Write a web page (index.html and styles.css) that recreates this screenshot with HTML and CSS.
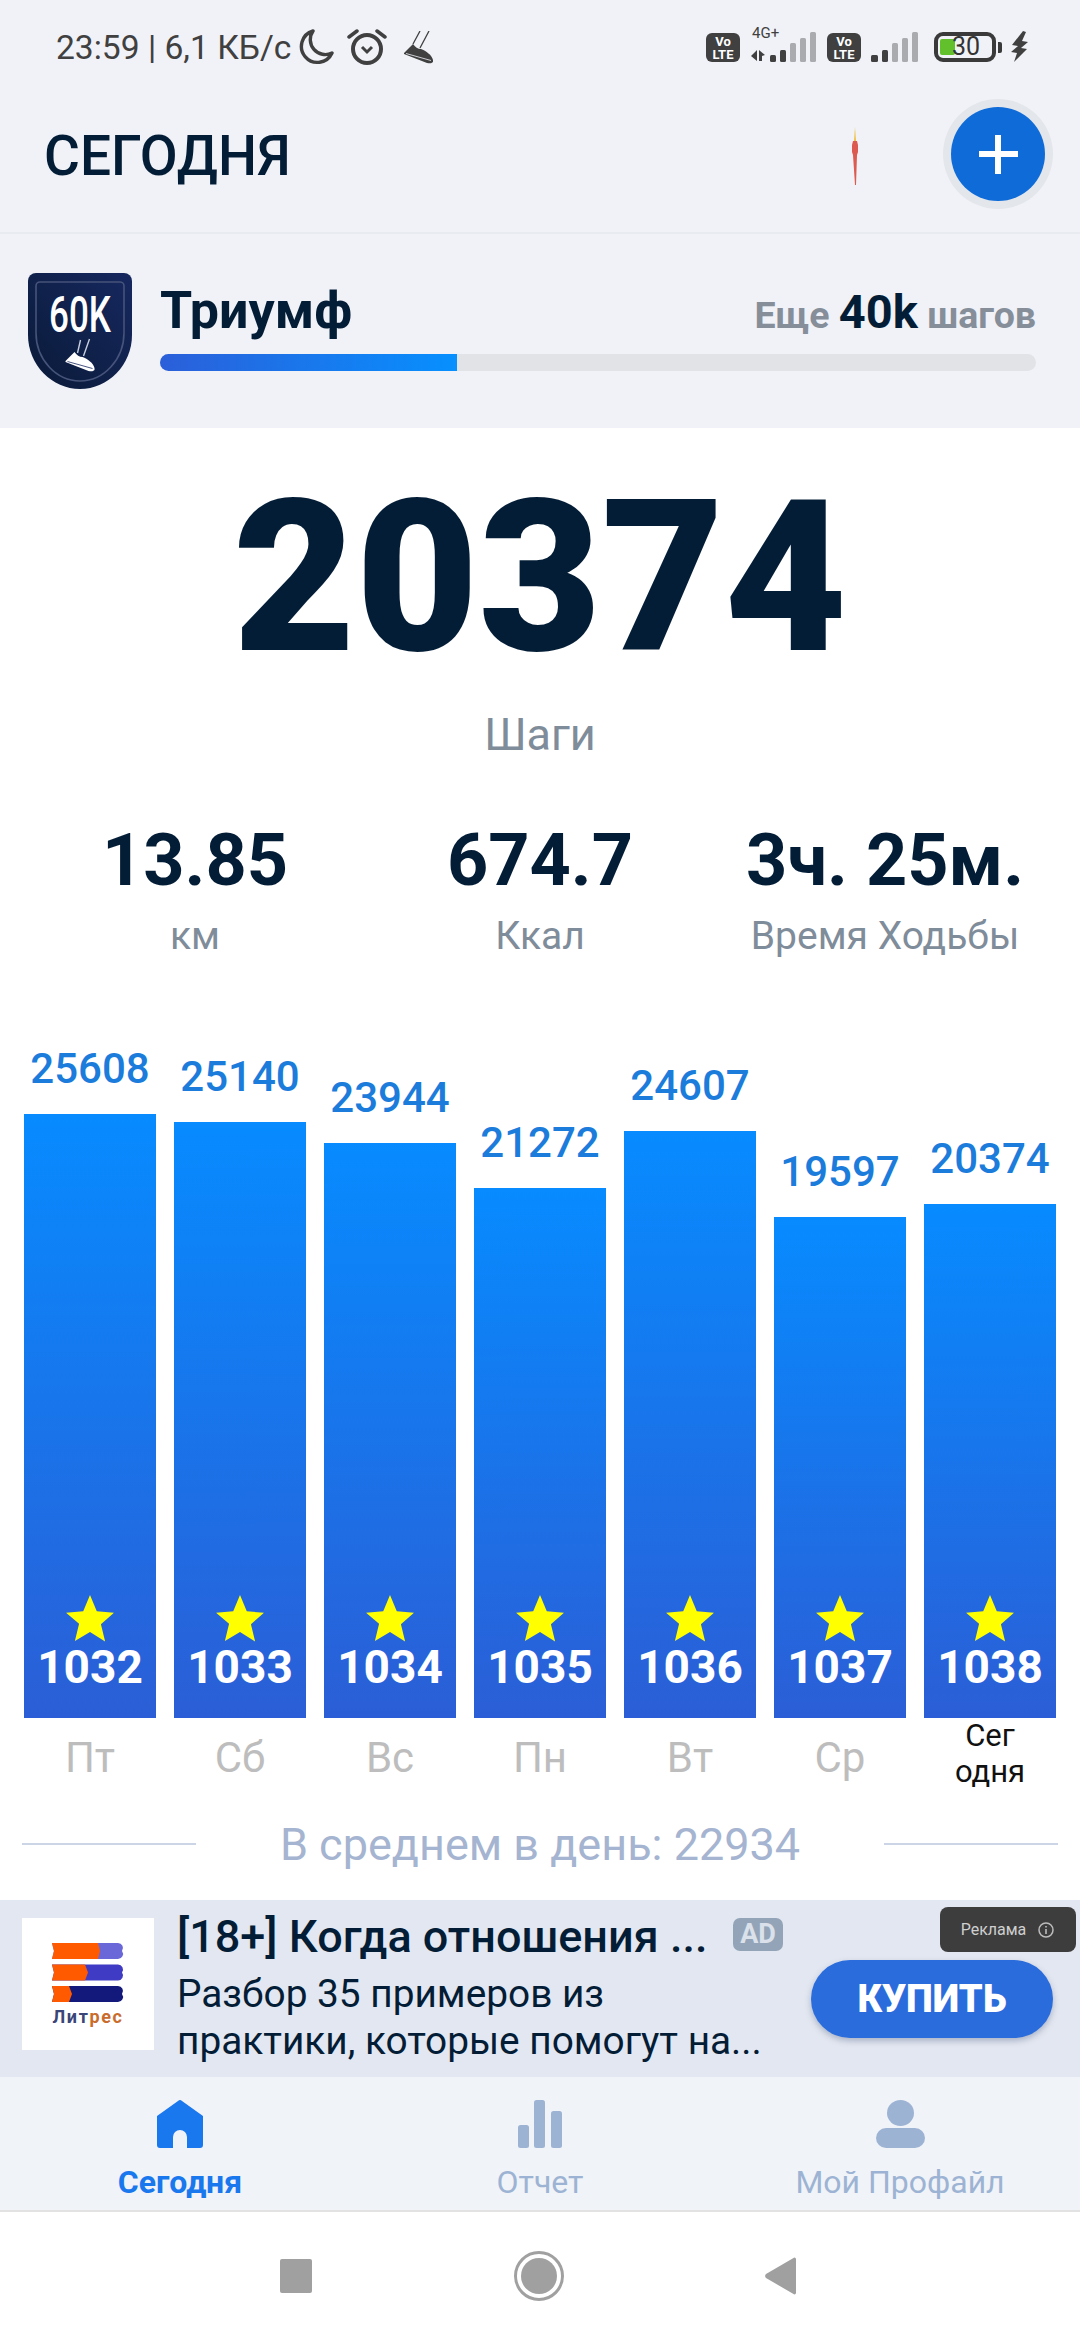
FILE: index.html
```html
<!DOCTYPE html>
<html lang="en">
<head>
    <meta charset="UTF-8">
    <meta name="viewport" content="width=device-width, initial-scale=1.0">
    <title>Сегодня</title>
    <link rel="stylesheet" href="styles.css">
</head>
<body>
    <div class="top">
        <div class="status">
            <span class="status-text">23:59 | 6,1 КБ/с</span>
            <svg class="ic-moon" width="36" height="38" viewBox="0 0 36 38"><path d="M14 3 A16 16 0 1 0 33 25 A15 15 0 0 1 14 3 Z" fill="none" stroke="#404040" stroke-width="3.4" stroke-linejoin="round"/></svg>
            <svg class="ic-alarm" width="40" height="38" viewBox="0 0 40 38"><circle cx="20" cy="21" r="14" fill="none" stroke="#404040" stroke-width="4"/><path d="M15 19l5 5 5-5" fill="none" stroke="#404040" stroke-width="3"/><path d="M2 9l8-6M38 9l-8-6" stroke="#404040" stroke-width="3.5" stroke-linecap="round"/></svg>
            <svg class="ic-shoe" width="30" height="33" viewBox="0 0 30 33"><path d="M0 22L9 13C11 16 14 18 17 18C22 20 28 24 29 29V31C27 33 25 32 23 32L0 23Z" fill="#404040"/><path d="M2 22.500L27 29.500" stroke="#f0f2f7" stroke-width="0.8"/><path d="M9 13L16 0M16 17L25 0" stroke="#404040" stroke-width="1.3" fill="none"/></svg>
            <div class="status-right">
                <div class="volte">Vo<br>LTE</div>
                <div class="sig-wrap">
                    <span class="sig-4g">4G+</span>
                    <svg width="66" height="32" viewBox="0 0 66 32"><path d="M1 26l6-6v11zM9 20l6 5-3 1v5H9z" fill="#404040"/><rect x="20" y="25" width="6" height="7" rx="1.5" fill="#404040"/><rect x="30" y="20" width="6" height="12" rx="1.5" fill="#404040"/><rect x="40" y="13" width="6" height="19" rx="1.5" fill="#a9abae"/><rect x="50" y="8" width="6" height="24" rx="1.5" fill="#a9abae"/><rect x="60" y="2" width="6" height="30" rx="1.5" fill="#a9abae"/></svg>
                </div>
                <div class="volte volte-2">Vo<br>LTE</div>
                <svg class="sig-2" width="48" height="32" viewBox="0 0 48 32"><rect x="0" y="25" width="7" height="7" rx="1.5" fill="#404040"/><rect x="11" y="20" width="6" height="12" rx="1.5" fill="#404040"/><rect x="21" y="13" width="6" height="19" rx="1.5" fill="#a9abae"/><rect x="31" y="8" width="6" height="24" rx="1.5" fill="#a9abae"/><rect x="41" y="2" width="6" height="30" rx="1.5" fill="#a9abae"/></svg>
                <div class="battery"><span class="battery-fill"></span><span class="battery-num">30</span></div>
                <span class="battery-tip"></span>
                <svg class="ic-bolt" width="18" height="31" viewBox="0 0 18 31"><path d="M12 0L1 14l6 1-7 6 6 1-3 9 13-13-6-1 7-6-6-1 4-9z" fill="#404040"/></svg>
            </div>
        </div>

        <div class="appbar">
            <h1 class="title">СЕГОДНЯ</h1>
            <svg class="spark" width="6" height="58" viewBox="0 0 6 58"><path d="M3 0l1 14H2z" fill="#f0c040"/><path d="M1 14h4l1 4v7l-1 3-1 30h-1L1 28 0 25v-7z" fill="#dd5a50"/></svg>
            <div class="add-btn"><span class="plus-h"></span><span class="plus-v"></span></div>
        </div>

        <div class="level">
            <svg class="badge" width="104" height="116" viewBox="0 0 104 116">
                <defs>
                    <linearGradient id="shield" x1="0" y1="1" x2="1" y2="0">
                        <stop offset="0" stop-color="#0a1a38"/>
                        <stop offset="1" stop-color="#16285f"/>
                    </linearGradient>
                </defs>
                <path d="M8 0H96a8 8 0 0 1 8 8V62C104 92 80 116 52 116S0 92 0 62V8A8 8 0 0 1 8 0Z" fill="url(#shield)"/>
                <path d="M12 9H92a4 4 0 0 1 4 4V60C96 86 76 108 52 108S8 86 8 60V13A4 4 0 0 1 12 9Z" fill="none" stroke="#46537a" stroke-width="1.6"/>
                <text transform="translate(52 59) scale(.7 1)" text-anchor="middle" class="badge-text">60K</text>
                <g transform="translate(37.500 66)">
                    <path d="M0 22L9 13C11 16 14 18 17 18C22 20 28 24 29 29V31C27 33 25 32 23 32L0 23Z" fill="#fff"/>
                    <path d="M2 22.500L27 29.500" stroke="#16285f" stroke-width="0.8"/>
                    <path d="M12 14L15 1M18 17L24 0" stroke="#c8cede" stroke-width="1.4" fill="none"/>
                </g>
            </svg>
            <div class="level-body">
                <div class="level-row">
                    <span class="level-name">Триумф</span>
                    <span class="level-left">Еще <b>40k</b> шагов</span>
                </div>
                <div class="progress"><div class="progress-fill" style="width: 33.9%"></div></div>
            </div>
        </div>
    </div>

    <div class="main">
        <div class="steps">20374</div>
        <div class="steps-label">Шаги</div>

        <div class="stats">
            <div class="stat"><div class="stat-val">13.85</div><div class="stat-label">км</div></div>
            <div class="stat"><div class="stat-val">674.7</div><div class="stat-label">Ккал</div></div>
            <div class="stat"><div class="stat-val">3ч. 25м.</div><div class="stat-label">Время Ходьбы</div></div>
        </div>

        <div class="chart">
            <div class="col">
                <div class="col-val">25608</div>
                <div class="bar" style="height: 604px"><svg class="star" width="50" height="48" viewBox="0 0 48 46"><path d="M24 1l6.5 15.5 16.5 1.5-12.5 11 4 16.500L24 36.500 9.500 45l4-16.500L1 18l16.500-1.500z" fill="#ffff00"/></svg><span class="bar-num">1032</span></div>
                <div class="col-day">Пт</div>
            </div>
            <div class="col">
                <div class="col-val">25140</div>
                <div class="bar" style="height: 596px"><svg class="star" width="50" height="48" viewBox="0 0 48 46"><path d="M24 1l6.5 15.5 16.5 1.5-12.5 11 4 16.500L24 36.500 9.500 45l4-16.500L1 18l16.500-1.500z" fill="#ffff00"/></svg><span class="bar-num">1033</span></div>
                <div class="col-day">Сб</div>
            </div>
            <div class="col">
                <div class="col-val">23944</div>
                <div class="bar" style="height: 575px"><svg class="star" width="50" height="48" viewBox="0 0 48 46"><path d="M24 1l6.5 15.5 16.5 1.5-12.5 11 4 16.500L24 36.500 9.500 45l4-16.500L1 18l16.500-1.500z" fill="#ffff00"/></svg><span class="bar-num">1034</span></div>
                <div class="col-day">Вс</div>
            </div>
            <div class="col">
                <div class="col-val">21272</div>
                <div class="bar" style="height: 530px"><svg class="star" width="50" height="48" viewBox="0 0 48 46"><path d="M24 1l6.5 15.5 16.5 1.5-12.5 11 4 16.500L24 36.500 9.500 45l4-16.500L1 18l16.500-1.500z" fill="#ffff00"/></svg><span class="bar-num">1035</span></div>
                <div class="col-day">Пн</div>
            </div>
            <div class="col">
                <div class="col-val">24607</div>
                <div class="bar" style="height: 587px"><svg class="star" width="50" height="48" viewBox="0 0 48 46"><path d="M24 1l6.5 15.5 16.5 1.5-12.5 11 4 16.500L24 36.500 9.500 45l4-16.500L1 18l16.500-1.500z" fill="#ffff00"/></svg><span class="bar-num">1036</span></div>
                <div class="col-day">Вт</div>
            </div>
            <div class="col">
                <div class="col-val">19597</div>
                <div class="bar" style="height: 501px"><svg class="star" width="50" height="48" viewBox="0 0 48 46"><path d="M24 1l6.5 15.5 16.5 1.5-12.5 11 4 16.500L24 36.500 9.500 45l4-16.500L1 18l16.500-1.500z" fill="#ffff00"/></svg><span class="bar-num">1037</span></div>
                <div class="col-day">Ср</div>
            </div>
            <div class="col">
                <div class="col-val">20374</div>
                <div class="bar" style="height: 514px"><svg class="star" width="50" height="48" viewBox="0 0 48 46"><path d="M24 1l6.5 15.5 16.5 1.5-12.5 11 4 16.500L24 36.500 9.500 45l4-16.500L1 18l16.500-1.500z" fill="#ffff00"/></svg><span class="bar-num">1038</span></div>
                <div class="col-day col-today">Сег<br>одня</div>
            </div>
        </div>

        <div class="avg">
            <span class="avg-line"></span>
            <span class="avg-text">В среднем в день: 22934</span>
            <span class="avg-line"></span>
        </div>
    </div>

    <div class="ad">
        <div class="ad-logo">
            <svg width="72" height="59" viewBox="0 0 72 59">
                <path d="M0 0H66a5 5 0 0 1 4 8 5 5 0 0 1-4 8H0l2-8z" fill="#6a68d8"/>
                <path d="M0 0H46l2 8-2 8H0l2-8z" fill="#ff5a00"/>
                <path d="M0 21.500H66a5 5 0 0 1 4 8 5 5 0 0 1-4 8H0l2-8z" fill="#3f3bc4"/>
                <path d="M0 21.500H33l3 8-3 8H0l2-8z" fill="#ff5a00"/>
                <path d="M0 43H66a5 5 0 0 1 4 8 5 5 0 0 1-4 8H0l2-8z" fill="#12197a"/>
                <path d="M0 43H17l3 8-3 8H0l2-8z" fill="#ff5a00"/>
            </svg>
            <div class="ad-logo-text">Лит<span class="ad-logo-orange">рес</span></div>
        </div>
        <div class="ad-body">
            <div class="ad-title-row">
                <span class="ad-title">[18+] Когда отношения ...</span>
                <span class="ad-badge">AD</span>
            </div>
            <div class="ad-desc">Разбор 35 примеров из<br>практики, которые помогут на...</div>
        </div>
        <div class="ad-btn">КУПИТЬ</div>
        <div class="ad-tag">Реклама
            <svg width="18" height="18" viewBox="0 0 18 18"><circle cx="9" cy="9" r="7" fill="none" stroke="#bcbcbc" stroke-width="1.5"/><path d="M9 8v5M9 5v1.600" stroke="#bcbcbc" stroke-width="1.600"/></svg>
        </div>
    </div>

    <div class="nav">
        <div class="nav-item nav-active">
            <svg width="46" height="48" viewBox="0 0 46 48"><path d="M21 1a3 3 0 0 1 4 0L46 16V45a3 3 0 0 1-3 3H30V37a7 7 0 0 0-14 0V48H3a3 3 0 0 1-3-3V16Z" fill="#1a78ee"/></svg>
            <span>Сегодня</span>
        </div>
        <div class="nav-item">
            <svg width="45" height="48" viewBox="0 0 45 48"><rect x="0" y="25" width="11" height="23" rx="2.500" fill="#9db3d4"/><rect x="16" y="0" width="11" height="48" rx="2.500" fill="#9db3d4"/><rect x="33" y="11" width="11" height="37" rx="2.500" fill="#9db3d4"/></svg>
            <span>Отчет</span>
        </div>
        <div class="nav-item">
            <svg width="49" height="48" viewBox="0 0 49 48"><ellipse cx="24.500" cy="13" rx="13.500" ry="13" fill="#9db3d4"/><rect x="0" y="28" width="49" height="20" rx="10" fill="#9db3d4"/></svg>
            <span>Мой Профайл</span>
        </div>
    </div>

    <div class="sysbar">
        <span class="sys-square"></span>
        <span class="sys-circle"><span class="sys-dot"></span></span>
        <svg width="32" height="38" viewBox="0 0 32 38"><path d="M31 2V36a1.500 1.500 0 0 1-2.500 1L1 21a3 3 0 0 1 0-4L28.500 1A1.500 1.500 0 0 1 31 2Z" fill="#a0a0a0"/></svg>
    </div>
</body>
</html>
```

FILE: styles.css
```css
* {
    box-sizing: border-box;
}
body {
    margin: 0;
    width: 1080px;
    height: 2340px;
    overflow: hidden;
    background: #fff;
    font-family: Roboto, "Noto Sans", sans-serif;
    color: #041d36;
}

/* top block */
.top {
    background: #f0f2f7;
    height: 428px;
}
.status {
    height: 88px;
    display: flex;
    align-items: center;
    padding: 6px 0 0 56px;
    color: #404040;
}
.status-text {
    font-size: 33.6px;
    margin-right: 8px;
    white-space: nowrap;
}
.ic-alarm {
    margin-left: 12px;
}
.ic-shoe {
    margin-left: 17px;
}
.status-right {
    margin-left: auto;
    display: flex;
    align-items: flex-end;
    height: 30px;
    padding-right: 51px;
}
.volte {
    width: 34px;
    height: 29px;
    background: #404040;
    border-radius: 6px;
    color: #fff;
    font-size: 13px;
    font-weight: 700;
    line-height: 13px;
    text-align: center;
    padding-top: 2px;
}
.volte-2 {
    margin-left: 11px;
}
.sig-wrap {
    position: relative;
    margin-left: 10px;
    height: 32px;
}
.sig-4g {
    position: absolute;
    left: 2px;
    top: -6px;
    font-size: 15px;
    color: #404040;
}
.sig-2 {
    margin-left: 10px;
}
.battery {
    position: relative;
    width: 62px;
    height: 30px;
    margin-left: 15px;
    border: 4px solid #3a3a3a;
    border-radius: 9px;
}
.battery-fill {
    position: absolute;
    left: 2px;
    top: 3px;
    width: 15px;
    height: 16px;
    background: #62c02c;
    border-radius: 2px;
}
.battery-num {
    position: absolute;
    left: 14px;
    top: -3px;
    font-size: 25px;
    line-height: 28px;
    color: #333;
}
.battery-tip {
    width: 4px;
    height: 11px;
    margin: 0 0 9px 2px;
    background: #3a3a3a;
    border-radius: 0 2px 2px 0;
}
.ic-bolt {
    margin-left: 9px;
}
.appbar {
    height: 146px;
    display: flex;
    align-items: center;
    padding: 0 35px 8px 44px;
    border-bottom: 2px solid #e8ebf0;
}
.title {
    margin: 0;
    font-size: 55px;
    font-weight: 500;
    line-height: 60px;
}
.spark {
    margin-left: auto;
}
.add-btn {
    position: relative;
    width: 94px;
    height: 94px;
    margin-left: 93px;
    margin-bottom: 4px;
    border-radius: 50%;
    background: #0f6bd8;
    box-shadow: 0 0 0 8px #e3e6ea;
}
.plus-h,
.plus-v {
    position: absolute;
    background: #fff;
}
.plus-h {
    left: 28px;
    top: 44px;
    width: 39px;
    height: 6px;
}
.plus-v {
    left: 44px;
    top: 28px;
    width: 6px;
    height: 39px;
}
.level {
    display: flex;
    padding: 39px 44px 0 28px;
}
.badge-text {
    font-size: 50px;
    font-weight: 500;
    fill: #fff;
    font-family: Roboto, sans-serif;
}
.level-body {
    flex: 1;
    margin-left: 28px;
}
.level-row {
    display: flex;
    justify-content: space-between;
    align-items: baseline;
    height: 81px;
    line-height: 75px;
}
.level-name {
    font-size: 52px;
    font-weight: 700;
}
.level-left {
    font-size: 37.5px;
    font-weight: 700;
    color: #858e99;
}
.level-left b {
    font-size: 47px;
    font-weight: 700;
    color: #041d36;
}
.progress {
    height: 17px;
    background: #e2e3e6;
    border-radius: 9px;
    overflow: hidden;
}
.progress-fill {
    height: 100%;
    background: linear-gradient(90deg, #2b5fd9, #0790ff);
}

/* steps */
.main {
    height: 1472px;
    padding-top: 44px;
}
.steps {
    font-size: 212px;
    font-weight: 900;
    line-height: 212px;
    text-align: center;
}
.steps-label {
    margin-top: 26px;
    font-size: 45px;
    line-height: 50px;
    text-align: center;
    color: #7f8c9a;
}
.stats {
    display: grid;
    grid-template-columns: 390px 300px 390px;
    margin-top: 61px;
    text-align: center;
}
.stat-val {
    font-size: 72px;
    font-weight: 700;
    line-height: 80px;
}
.stat-label {
    margin-top: 12px;
    font-size: 39px;
    line-height: 46px;
    color: #7f8c9a;
}

/* chart */
.chart {
    display: flex;
    align-items: flex-end;
    gap: 18px;
    height: 837px;
    padding: 0 24px;
}
.col {
    width: 132px;
    text-align: center;
}
.col-val {
    font-size: 42px;
    font-weight: 500;
    line-height: 48px;
    margin-bottom: 21px;
    color: #1b7cdc;
}
.bar {
    display: flex;
    flex-direction: column;
    justify-content: flex-end;
    align-items: center;
    padding-bottom: 32px;
    background: linear-gradient(180deg, #078bff, #2b5ed6);
}
.bar-num {
    margin-top: 6px;
    font-size: 46px;
    font-weight: 700;
    line-height: 38px;
    color: #fff;
}
.col-day {
    height: 78px;
    padding-top: 16px;
    font-size: 42px;
    line-height: 48px;
    color: #bdbdbd;
}
.col-today {
    padding-top: 0;
    font-size: 31px;
    line-height: 36px;
    color: #111;
}
.avg {
    display: flex;
    align-items: center;
    justify-content: space-between;
    padding: 0 22px;
    height: 60px;
    margin-top: 18px;
}
.avg-line {
    width: 174px;
    height: 2px;
    background: #ccd5e5;
}
.avg-text {
    font-size: 45px;
    color: #a5b4d0;
}

/* ad */
.ad {
    position: relative;
    display: flex;
    height: 177px;
    background: #e3e7f1;
    padding: 18px 22px 0;
}
.ad-logo {
    width: 132px;
    height: 132px;
    background: #fff;
    padding-top: 25px;
    display: flex;
    flex-direction: column;
    align-items: center;
}
.ad-logo-text {
    font-size: 18px;
    font-weight: 700;
    letter-spacing: 1.6px;
    color: #3a4578;
    line-height: 22px;
    margin-top: 4px;
}
.ad-logo-orange {
    color: #c96c2c;
}
.ad-body {
    margin-left: 23px;
}
.ad-title-row {
    display: flex;
    align-items: center;
    height: 36px;
}
.ad-title {
    font-size: 45px;
    font-weight: 500;
    white-space: nowrap;
}
.ad-badge {
    position: absolute;
    left: 733px;
    top: 18px;
    width: 50px;
    height: 33px;
    border-radius: 7px;
    background: #94a4b8;
    color: #dbe1ea;
    font-size: 27px;
    font-weight: 700;
    line-height: 33px;
    text-align: center;
}
.ad-desc {
    margin-top: 16px;
    font-size: 38.8px;
    line-height: 47px;
    white-space: nowrap;
}
.ad-btn {
    position: absolute;
    left: 811px;
    top: 60px;
    width: 242px;
    height: 78px;
    border-radius: 39px;
    background: #2a6cdc;
    box-shadow: 0 3px 6px rgba(60, 80, 120, 0.35);
    color: #fff;
    font-size: 38px;
    font-weight: 900;
    line-height: 78px;
    text-align: center;
}
.ad-tag {
    position: absolute;
    left: 940px;
    top: 7px;
    width: 136px;
    height: 45px;
    border-radius: 8px;
    background: #3d3d3d;
    color: #cfcfcf;
    font-size: 16px;
    display: flex;
    align-items: center;
    justify-content: center;
    gap: 11px;
}

/* bottom nav */
.nav {
    display: grid;
    grid-template-columns: repeat(3, 1fr);
    height: 133px;
    background: #f0f3f7;
    padding-top: 23px;
    text-align: center;
    font-size: 32px;
    color: #9db3d4;
}
.nav-item {
    display: flex;
    flex-direction: column;
    align-items: center;
    gap: 16px;
    line-height: 36px;
}
.nav-active {
    color: #1a78ee;
    font-weight: 700;
}
.sysbar {
    display: flex;
    align-items: center;
    justify-content: space-between;
    height: 130px;
    padding: 0 283px 0 280px;
    border-top: 2px solid #e2e2e2;
}
.sys-square {
    width: 32px;
    height: 34px;
    background: #a0a0a0;
    border-radius: 2px;
}
.sys-circle {
    display: flex;
    align-items: center;
    justify-content: center;
    width: 50px;
    height: 50px;
    border: 3px solid #a0a0a0;
    border-radius: 50%;
}
.sys-dot {
    width: 36px;
    height: 36px;
    background: #a0a0a0;
    border-radius: 50%;
}
```
